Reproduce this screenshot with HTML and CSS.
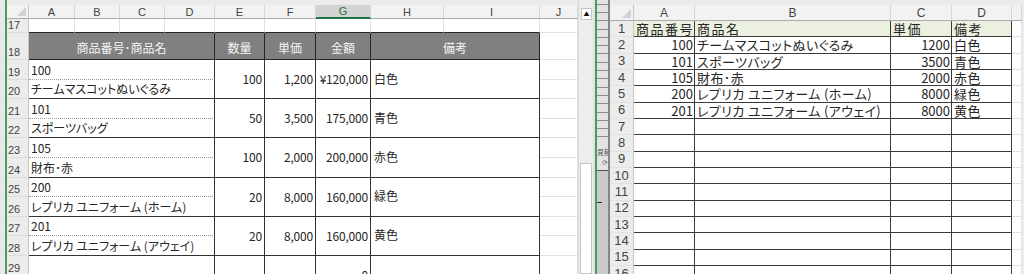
FILE: index.html
```html
<!DOCTYPE html>
<html lang="ja">
<head>
  <meta charset="UTF-8">
  <title>見積 - 商品一覧</title>
  <link rel="stylesheet" href="styles.css">
</head>
<body>
  <div class="app">
    <div class="gutter"></div>

    <!-- left window: quotation sheet -->
    <div class="pane">
      <div class="sheet sheet-left">
        <div class="corner"></div>
        <div class="colh">A</div>
        <div class="colh">B</div>
        <div class="colh">C</div>
        <div class="colh">D</div>
        <div class="colh">E</div>
        <div class="colh">F</div>
        <div class="colh active">G</div>
        <div class="colh">H</div>
        <div class="colh">I</div>
        <div class="colh">J</div>

        <div class="rh">17</div>
        <div class="c top"></div>
        <div class="c top"></div>
        <div class="c top"></div>
        <div class="c top"></div>
        <div class="c top"></div>
        <div class="c top"></div>
        <div class="c top"></div>
        <div class="c top"></div>
        <div class="c top"></div>
        <div class="c"></div>

        <div class="rh">18</div>
        <div class="th span4">商品番号･商品名</div>
        <div class="th">数量</div>
        <div class="th">単価</div>
        <div class="th">金額</div>
        <div class="th span2">備考</div>
        <div class="c"></div>

        <div class="rh">19</div>
        <div class="td code span4">100</div>
        <div class="td num rows2">100</div>
        <div class="td num rows2">1,200</div>
        <div class="td num rows2">¥120,000</div>
        <div class="td note rows2 span2">白色</div>
        <div class="c"></div>
        <div class="rh">20</div>
        <div class="td span4">チームマスコットぬいぐるみ</div>
        <div class="c"></div>

        <div class="rh">21</div>
        <div class="td code span4">101</div>
        <div class="td num rows2">50</div>
        <div class="td num rows2">3,500</div>
        <div class="td num rows2">175,000</div>
        <div class="td note rows2 span2">青色</div>
        <div class="c"></div>
        <div class="rh">22</div>
        <div class="td span4">スポーツバッグ</div>
        <div class="c"></div>

        <div class="rh">23</div>
        <div class="td code span4">105</div>
        <div class="td num rows2">100</div>
        <div class="td num rows2">2,000</div>
        <div class="td num rows2">200,000</div>
        <div class="td note rows2 span2">赤色</div>
        <div class="c"></div>
        <div class="rh">24</div>
        <div class="td span4">財布･赤</div>
        <div class="c"></div>

        <div class="rh">25</div>
        <div class="td code span4">200</div>
        <div class="td num rows2">20</div>
        <div class="td num rows2">8,000</div>
        <div class="td num rows2">160,000</div>
        <div class="td note rows2 span2">緑色</div>
        <div class="c"></div>
        <div class="rh">26</div>
        <div class="td span4">レプリカ ユニフォーム (ホーム)</div>
        <div class="c"></div>

        <div class="rh">27</div>
        <div class="td code span4">201</div>
        <div class="td num rows2">20</div>
        <div class="td num rows2">8,000</div>
        <div class="td num rows2">160,000</div>
        <div class="td note rows2 span2">黄色</div>
        <div class="c"></div>
        <div class="rh">28</div>
        <div class="td span4">レプリカ ユニフォーム (アウェイ)</div>
        <div class="c"></div>

        <div class="rh">29</div>
        <div class="td span4 blank"></div>
        <div class="td num rows2"></div>
        <div class="td num rows2"></div>
        <div class="td num rows2">0</div>
        <div class="td note rows2 span2"></div>
        <div class="c"></div>
        <div class="rh">30</div>
        <div class="td span4"></div>
        <div class="c"></div>
      </div>

      <div class="vscroll">
        <div class="arrow">&#9650;</div>
        <div class="track"></div>
        <div class="thumb"></div>
      </div>
    </div>

    <!-- squeezed window between the two sheets -->
    <div class="strip">
      <div class="strip-lines"></div>
      <div class="strip-tab">見積<br><span>⟳</span></div>
      <div class="strip-low"><span class="dash"></span></div>
    </div>

    <!-- right window: product master -->
    <div class="pane">
      <div class="sheet sheet-right">
        <div class="corner"></div>
        <div class="colh">A</div>
        <div class="colh">B</div>
        <div class="colh">C</div>
        <div class="colh">D</div>
        <div class="colh"></div>

        <div class="rh">1</div>
        <div class="mc head">商品番号</div>
        <div class="mc head">商品名</div>
        <div class="mc head">単価</div>
        <div class="mc head">備考</div>
        <div class="c"></div>

        <div class="rh">2</div>
        <div class="mc num">100</div>
        <div class="mc">チームマスコットぬいぐるみ</div>
        <div class="mc num">1200</div>
        <div class="mc">白色</div>
        <div class="c"></div>

        <div class="rh">3</div>
        <div class="mc num">101</div>
        <div class="mc">スポーツバッグ</div>
        <div class="mc num">3500</div>
        <div class="mc">青色</div>
        <div class="c"></div>

        <div class="rh">4</div>
        <div class="mc num">105</div>
        <div class="mc">財布･赤</div>
        <div class="mc num">2000</div>
        <div class="mc">赤色</div>
        <div class="c"></div>

        <div class="rh">5</div>
        <div class="mc num">200</div>
        <div class="mc">レプリカ ユニフォーム (ホーム)</div>
        <div class="mc num">8000</div>
        <div class="mc">緑色</div>
        <div class="c"></div>

        <div class="rh">6</div>
        <div class="mc num">201</div>
        <div class="mc">レプリカ ユニフォーム (アウェイ)</div>
        <div class="mc num">8000</div>
        <div class="mc">黄色</div>
        <div class="c"></div>

        <div class="rh">7</div><div class="mc"></div><div class="mc"></div><div class="mc"></div><div class="mc"></div><div class="c"></div>
        <div class="rh">8</div><div class="mc"></div><div class="mc"></div><div class="mc"></div><div class="mc"></div><div class="c"></div>
        <div class="rh">9</div><div class="mc"></div><div class="mc"></div><div class="mc"></div><div class="mc"></div><div class="c"></div>
        <div class="rh">10</div><div class="mc"></div><div class="mc"></div><div class="mc"></div><div class="mc"></div><div class="c"></div>
        <div class="rh">11</div><div class="mc"></div><div class="mc"></div><div class="mc"></div><div class="mc"></div><div class="c"></div>
        <div class="rh">12</div><div class="mc"></div><div class="mc"></div><div class="mc"></div><div class="mc"></div><div class="c"></div>
        <div class="rh">13</div><div class="mc"></div><div class="mc"></div><div class="mc"></div><div class="mc"></div><div class="c"></div>
        <div class="rh">14</div><div class="mc"></div><div class="mc"></div><div class="mc"></div><div class="mc"></div><div class="c"></div>
        <div class="rh">15</div><div class="mc"></div><div class="mc"></div><div class="mc"></div><div class="mc"></div><div class="c"></div>
        <div class="rh">16</div><div class="mc"></div><div class="mc"></div><div class="mc"></div><div class="mc"></div><div class="c"></div>
      </div>
    </div>
  </div>
</body>
</html>
```

FILE: styles.css
```css
* {
  box-sizing: border-box;
}

body {
  margin: 0;
  height: 274px;
  overflow: hidden;
  background: #ebebeb;
  font-family: "Noto Sans CJK JP", sans-serif;
  font-feature-settings: "palt";
  color: #262626;
}

.app {
  display: flex;
  height: 274px;
}

.gutter {
  width: 5px;
  background: #e8e8e8;
  border-right: 2px solid #4d9a5e;
  flex: 0 0 7px;
}

.pane {
  display: flex;
  padding-top: 5px;
}

.sheet {
  display: grid;
  background: #fff;
  align-content: start;
}

.sheet-left {
  grid-template-columns: 22px 46px 45px 45px 50px 50px 51px 55px 73px 96px 38px;
  grid-template-rows: 14px 14px 27px repeat(12, 19.6px);
  font-size: 12px;
}

.sheet-right {
  grid-template-columns: 24px 61px 196px 61px 60px 10px;
  grid-template-rows: 16px repeat(16, 16.33px);
  font-size: 13px;
}

/* headers */

.corner {
  background: #f2f2f2;
  border-right: 1px solid #c6c6c6;
  border-bottom: 1px solid #ababab;
  position: relative;
}

.corner::after {
  content: "";
  position: absolute;
  right: 2px;
  bottom: 2px;
  border-left: 9px solid transparent;
  border-bottom: 9px solid #d2d2d2;
}

.colh {
  background: #f2f2f2;
  border-right: 1px solid #d6d6d6;
  border-bottom: 1px solid #ababab;
  color: #444;
  font-family: "Liberation Sans", sans-serif;
  font-size: 11px;
  display: flex;
  align-items: center;
  justify-content: center;
  overflow: hidden;
}

.sheet-right .colh {
  font-size: 12px;
}

.colh.active {
  background: #d3d3d3;
  border-bottom: 2px solid #217346;
  color: #217346;
}

.rh {
  background: #ececec;
  border-right: 1px solid #c6c6c6;
  border-bottom: 1px solid #dcdcdc;
  color: #444;
  font-family: "Liberation Sans", sans-serif;
  font-size: 11px;
  display: flex;
  align-items: flex-end;
  padding: 0 0 1px 1px;
  line-height: 12px;
}

.sheet-right .rh {
  font-size: 13px;
  justify-content: center;
  align-items: center;
  padding: 0;
  border-bottom-color: #e2e2e2;
}

/* plain cells */

.c {
  border-right: 1px solid #e1e1e1;
  border-bottom: 1px solid #e1e1e1;
}

.c.top {
  border-bottom-color: #262626;
}

/* quotation table */

.span4 { grid-column: span 4; }
.span2 { grid-column: span 2; }
.rows2 { grid-row: span 2; }

.th {
  background: #808080;
  color: #f4f4f4;
  border-right: 1px solid #262626;
  border-bottom: 1px solid #262626;
  display: flex;
  align-items: flex-end;
  justify-content: center;
  padding-bottom: 3px;
}

.td {
  border-right: 1px solid #333;
  border-bottom: 1px solid #333;
  display: flex;
  align-items: flex-end;
  padding: 0 2px 1px 2px;
  white-space: nowrap;
  overflow: hidden;
  line-height: 16px;
}

.td.code {
  border-bottom: 1px dotted #9a9a9a;
}

.td.blank {
  border-bottom: none;
}

.td.num {
  align-items: center;
  justify-content: flex-end;
  padding: 0 2px 0 0;
  letter-spacing: -0.2px;
}

.td.note {
  align-items: center;
  padding-left: 3px;
}

/* product master */

.mc {
  border-right: 1px solid #3a3a3a;
  border-bottom: 1px solid #3a3a3a;
  display: flex;
  align-items: center;
  padding: 0 2px;
  white-space: nowrap;
  overflow: hidden;
  letter-spacing: 0.4px;
  line-height: 15px;
}

.mc.head {
  background: #ebf1de;
  letter-spacing: 1.5px;
}

.mc.num {
  justify-content: flex-end;
  letter-spacing: 0;
  padding-right: 1px;
}

/* scroll bar */

.vscroll {
  width: 17px;
  margin-top: -5px;
  padding: 8px 1px 0 2px;
  background: #ededed;
  border-left: 1px solid #dadada;
  border-right: 2px solid #e2e2e2;
  display: flex;
  flex-direction: column;
}

.arrow {
  height: 12px;
  background: #fff;
  border: 1px solid #c3c3c3;
  font-size: 6px;
  line-height: 10px;
  text-align: center;
  color: #111;
}

.track {
  height: 143px;
}

.thumb {
  flex: 1;
  margin-left: -1px;
  background: #fff;
  border: 1px solid #c6c6c6;
}

/* squeezed window */

.strip {
  width: 15px;
  border-left: 2px solid #4d9a5e;
  border-right: 2px solid #858585;
  display: flex;
  flex-direction: column;
  background: #e3e3e3;
}

.strip-lines {
  height: 140px;
  background: repeating-linear-gradient(to bottom, transparent 0, transparent 3.6px, #8c8c8c 3.6px, #8c8c8c 4.6px, transparent 4.6px, transparent 8.3px);
}

.strip-tab {
  height: 30px;
  font-size: 7px;
  line-height: 10px;
  color: #555;
  padding-top: 7px;
  white-space: nowrap;
  overflow: hidden;
  text-align: right;
}

.strip-tab span {
  color: #666;
}

.strip-low {
  flex: 1;
  background: #c9c9c9;
  border-top: 1px solid #555;
  padding-top: 31px;
}

.dash {
  display: block;
  width: 5px;
  height: 1px;
  background: #333;
}
```
